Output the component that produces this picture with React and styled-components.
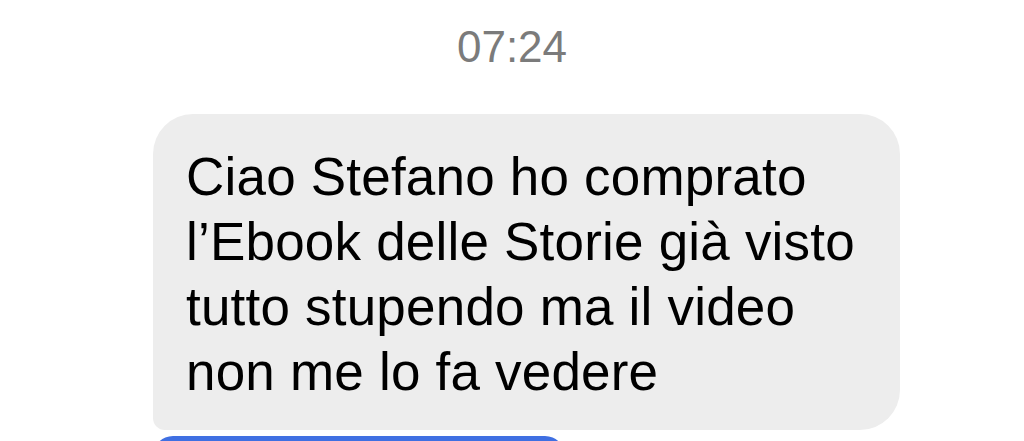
import React from 'react'
import styled, { createGlobalStyle } from 'styled-components'

const GlobalStyle = createGlobalStyle`
  html, body {
    margin: 0;
    padding: 0;
    background: #ffffff;
    overflow: hidden;
  }
`

const Screen = styled.div`
  width: 1024px;
  height: 441px;
  overflow: hidden;
  display: flex;
  flex-direction: column;
  font-family: "Liberation Sans", Arial, sans-serif;
  background: #ffffff;
`

const Time = styled.div`
  padding-top: 21px;
  text-align: center;
  font-size: 44px;
  line-height: 52px;
  color: #7b7b7b;
`

const Thread = styled.div`
  display: flex;
  flex-direction: column;
  align-items: flex-start;
  gap: 6px;
  padding-left: 153px;
  margin-top: 41px;
`

const Bubble = styled.div`
  box-sizing: border-box;
  width: 747px;
  padding: 30px 20px 26px 33px;
  background: ${(p) => (p.$mine ? '#3f6fe2' : '#ededed')};
  color: ${(p) => (p.$mine ? '#ffffff' : '#000000')};
  border-radius: 40px 40px 40px 12px;
  font-size: 53px;
  line-height: 65px;
  letter-spacing: 0.2px;
`

const Line = styled.div`
  white-space: nowrap;
`

const NextBubble = styled.div`
  width: 412px;
  height: 40px;
  background: #3f6fe2;
  border-radius: 22px;
`

const lines = [
  'Ciao Stefano ho comprato',
  'l\u2019Ebook delle Storie già visto',
  'tutto stupendo ma il video',
  'non me lo fa vedere',
]

export default function App() {
  return (
    <Screen>
      <GlobalStyle />
      <Time>07:24</Time>
      <Thread>
        <Bubble>
          {lines.map((l, i) => (
            <Line key={i}>{l}</Line>
          ))}
        </Bubble>
        <NextBubble />
      </Thread>
    </Screen>
  )
}
